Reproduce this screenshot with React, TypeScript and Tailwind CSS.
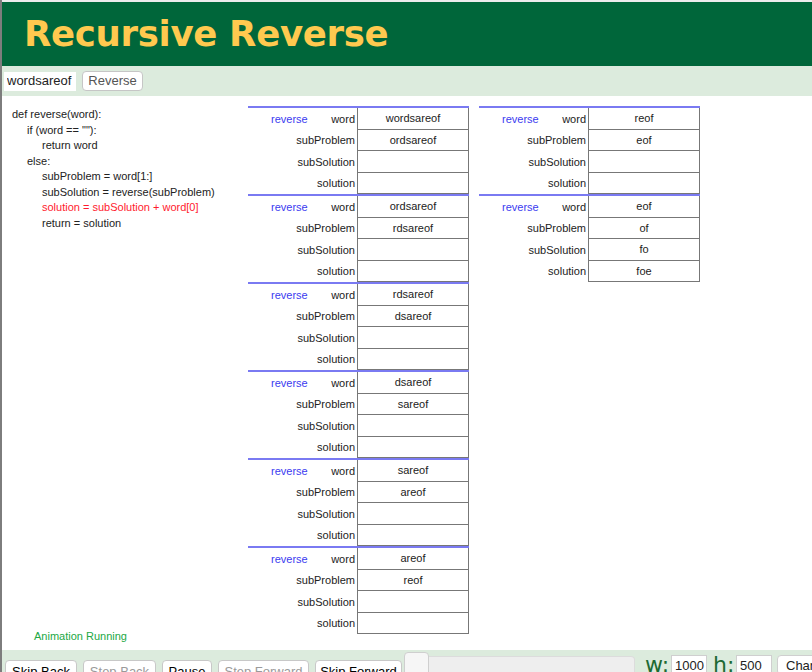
import React from "react";

type Frame = { word: string; subProblem: string; subSolution: string; solution: string };

const col1: Frame[] = [
  { word: "wordsareof", subProblem: "ordsareof", subSolution: "", solution: "" },
  { word: "ordsareof", subProblem: "rdsareof", subSolution: "", solution: "" },
  { word: "rdsareof", subProblem: "dsareof", subSolution: "", solution: "" },
  { word: "dsareof", subProblem: "sareof", subSolution: "", solution: "" },
  { word: "sareof", subProblem: "areof", subSolution: "", solution: "" },
  { word: "areof", subProblem: "reof", subSolution: "", solution: "" },
];

const col2: Frame[] = [
  { word: "reof", subProblem: "eof", subSolution: "", solution: "" },
  { word: "eof", subProblem: "of", subSolution: "fo", solution: "foe" },
];

const code: { text: string; indent: number; red?: boolean }[] = [
  { text: "def reverse(word):", indent: 0 },
  { text: 'if (word == ""):', indent: 1 },
  { text: "return word", indent: 2 },
  { text: "else:", indent: 1 },
  { text: "subProblem = word[1:]", indent: 2 },
  { text: "subSolution = reverse(subProblem)", indent: 2 },
  { text: "solution = subSolution + word[0]", indent: 2, red: true },
  { text: "return = solution", indent: 2 },
];

function Row({ label, value, first }: { label: string; value: string; first?: boolean }) {
  return (
    <div className="flex h-[21.5px]">
      <div className="relative flex w-[109px] items-center justify-end pr-[2px]">
        {first && <span className="absolute left-[23px] text-[#3b3bf0]">reverse</span>}
        <span>{label}</span>
      </div>
      <div className="flex w-[112px] items-center justify-center border-x border-b border-[#777]">
        {value}
      </div>
    </div>
  );
}

function FrameBox({ f }: { f: Frame }) {
  return (
    <div className="w-[221px] border-t-2 border-[#7a7af2]">
      <Row label="word" value={f.word} first />
      <Row label="subProblem" value={f.subProblem} />
      <Row label="subSolution" value={f.subSolution} />
      <Row label="solution" value={f.solution} />
    </div>
  );
}

function Btn({ children, disabled, w }: { children: React.ReactNode; disabled?: boolean; w: string }) {
  return (
    <button
      className={`h-[24px] shrink-0 whitespace-nowrap rounded-[4px] border border-[#c8c8c8] bg-white text-center text-[13px] leading-[22px] ${w} ${
        disabled ? "text-[#9a9a9a]" : "text-black"
      }`}
    >
      {children}
    </button>
  );
}

export default function App() {
  return (
    <div className="h-[672px] w-[812px] overflow-hidden border-l-2 border-[#7d7d7d] bg-white font-['Liberation_Sans',Arial,sans-serif] text-[11px] text-[#222]">
      <div className="h-[2px] bg-[#ececec]" />
      {/* header */}
      <div className="flex h-[64px] items-center bg-[#00663a] pl-[22px]">
        <h1 className="font-['DejaVu_Sans',Verdana,sans-serif] text-[35.5px] font-bold tracking-[-0.3px] text-[#ffc94f]">
          Recursive Reverse
        </h1>
      </div>
      {/* controls */}
      <div className="flex h-[30px] items-center gap-[6px] bg-[#dcebdd] pl-[2px]">
        <input
          readOnly
          value="wordsareof"
          className="h-[19px] w-[72px] bg-white px-[3px] text-[13px] text-[#222] outline-none"
        />
        <button className="h-[20px] w-[61px] rounded-[4px] border border-[#c6c6c6] bg-white text-[13px] leading-[18px] text-[#555]">
          Reverse
        </button>
      </div>
      {/* main */}
      <div className="flex h-[554px]">
        <div className="flex w-[246px] flex-col pl-[10px] pt-[11px]">
          {code.map((l, i) => (
            <div
              key={i}
              className={`h-[15.5px] leading-[15.5px] ${l.red ? "text-[#ff1a2e]" : "text-[#222]"} ${
                l.indent === 0 ? "" : l.indent === 1 ? "pl-[15px]" : "pl-[30px]"
              }`}
            >
              {l.text}
            </div>
          ))}
          <div className="mt-auto pb-[6px] pl-[22px] text-[#22a844]">Animation Running</div>
        </div>
        <div className="flex gap-[10px] pt-[10px]">
          <div className="flex flex-col">
            {col1.map((f, i) => (
              <FrameBox key={i} f={f} />
            ))}
          </div>
          <div className="flex flex-col">
            {col2.map((f, i) => (
              <FrameBox key={i} f={f} />
            ))}
          </div>
        </div>
      </div>
      {/* bottom bar */}
      <div className="flex h-[22px] items-start bg-[#dcebdd] pl-[3px]">
        <div className="flex shrink-0 gap-[6px] pt-[10px]">
          <Btn w="w-[72px]">Skip Back</Btn>
          <Btn w="w-[73px]" disabled>Step Back</Btn>
          <Btn w="w-[50px]">Pause</Btn>
          <Btn w="w-[91px]" disabled>Step Forward</Btn>
          <Btn w="w-[87px]">Skip Forward</Btn>
        </div>
        <div className="ml-[2px] flex shrink-0 items-start pt-[2px]">
          <div className="h-[24px] w-[25px] rounded-[4px] border border-[#cfcfcf] bg-[#f6f6f6]" />
          <div className="mt-[4px] h-[20px] w-[206px] rounded-r-[4px] border border-l-0 border-[#dcdcdc] bg-[#eeeeee]" />
        </div>
        <div className="ml-[10px] flex shrink-0 items-start pt-[5px]">
          <span className="w-[26px] font-['DejaVu_Sans',Verdana,sans-serif] text-[22px] leading-[20px] text-[#1d6a33]">w:</span>
          <div className="h-[20px] w-[36px] border border-[#cfcfcf] bg-white px-[3px] text-[13px] leading-[20px]">1000</div>
          <span className="ml-[6px] w-[23px] font-['DejaVu_Sans',Verdana,sans-serif] text-[22px] leading-[20px] text-[#1d6a33]">h:</span>
          <div className="h-[20px] w-[36px] border border-[#cfcfcf] bg-white px-[3px] text-[13px] leading-[20px]">500</div>
          <div className="ml-[5px] h-[20px] w-[60px] whitespace-nowrap rounded-[4px] border border-[#cfcfcf] bg-white px-[8px] text-[13px] leading-[20px]">Change</div>
        </div>
      </div>
    </div>
  );
}
